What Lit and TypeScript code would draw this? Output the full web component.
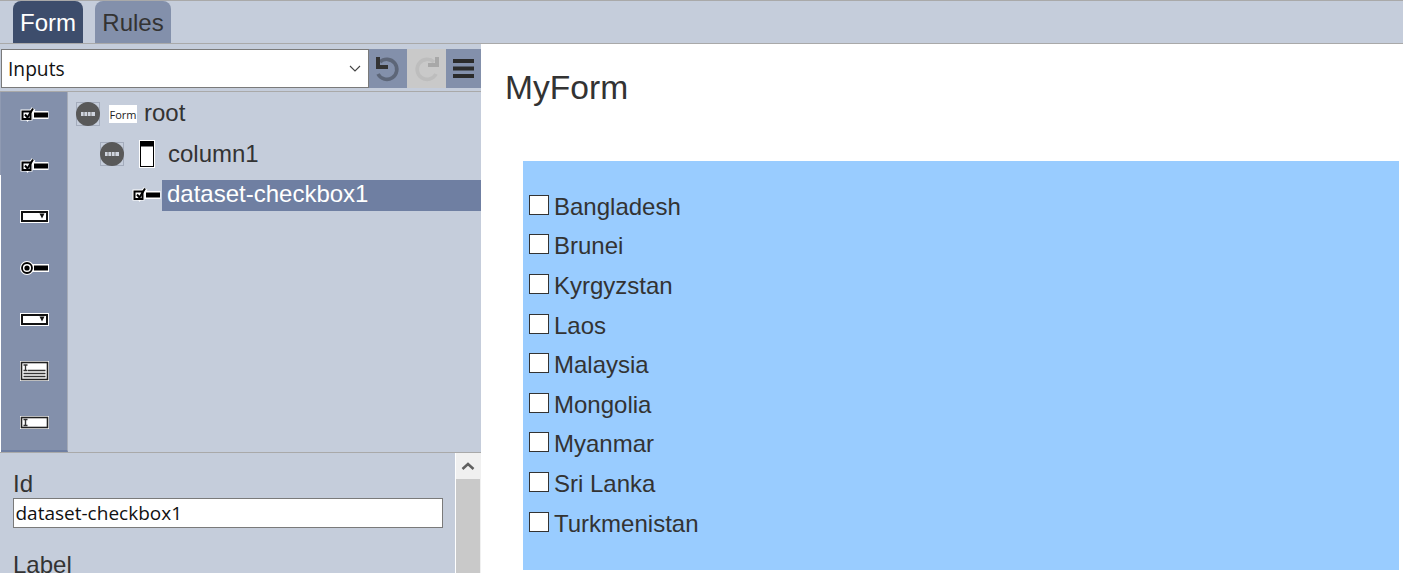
import { LitElement, html, css, svg } from "lit";
import { customElement } from "lit/decorators.js";

const frame = (inner: unknown, w = 29, h = 18) =>
  html`<svg class="ico" width=${w} height=${h} viewBox="0 0 ${w} ${h}">${inner}</svg>`;

const checkIcon = () => frame(svg`
  <rect x="0.5" y="4.5" width="12" height="11" fill="#fff"/>
  <rect x="12.5" y="6" width="16" height="8" fill="#fff"/>
  <path d="M5 9.5l2.5 3.5 6-9.5" fill="none" stroke="#fff" stroke-width="4.5"/>
  <rect x="2.5" y="6.5" width="8" height="7.5" fill="#fff" stroke="#000" stroke-width="2"/>
  <path d="M5 9.5l2.5 3 5.5-9" fill="none" stroke="#000" stroke-width="2"/>
  <rect x="14" y="7.5" width="14" height="5" fill="#000"/>`);
const selectIcon = () => frame(svg`
  <rect x="0" y="0" width="29" height="13" fill="#fff"/>
  <rect x="2" y="2" width="25" height="9" fill="#fff" stroke="#111" stroke-width="2"/>
  <path d="M19.5 3.5h5l-2.5 5z" fill="#111"/>`, 29, 13);
const radioIcon = () => frame(svg`
  <circle cx="7" cy="7" r="7" fill="#fff"/>
  <rect x="12" y="3" width="17" height="8" fill="#fff"/>
  <circle cx="7" cy="7" r="5" fill="#fff" stroke="#000" stroke-width="1.8"/>
  <circle cx="7" cy="7" r="2.6" fill="#000"/>
  <rect x="14" y="4.5" width="14" height="5" fill="#000"/>`, 29, 14);
const areaIcon = () => frame(svg`
  <rect x="0" y="0" width="29" height="20" fill="#fff"/>
  <rect x="1.5" y="1.5" width="26" height="17" fill="#fff" stroke="#222" stroke-width="1.6"/>
  <path d="M3.5 4h4M5.5 4v5.5M3.5 9.5h4" stroke="#333" stroke-width="1.3" fill="none"/>
  <path d="M8 9.5h17.5M3.5 12.5h22M3.5 15.5h22" stroke="#333" stroke-width="1.3"/>`, 29, 20);
const inputIcon = () => frame(svg`
  <rect x="0" y="0" width="29" height="13" fill="#fff"/>
  <rect x="1.5" y="1.5" width="26" height="10" fill="#fff" stroke="#222" stroke-width="1.6"/>
  <path d="M3.5 3.5h4M5.5 3.5v6M3.5 9.5h4" stroke="#333" stroke-width="1.4" fill="none"/>`, 29, 13);
const eye = () => html`<svg class="eye" width="24" height="24" viewBox="0 0 24 24">
  <rect x=".5" y=".5" width="23" height="23" fill="none" stroke="#a4acbc"/>
  <circle cx="12" cy="12" r="12" fill="#595959"/>
  <rect x="5" y="10" width="14" height="4" fill="#cfd4de"/>
  <path d="M8 10v4M11.5 10v4M15 10v4" stroke="#7d7d7d" stroke-width="1"/></svg>`;
const columnIcon = () => html`<svg width="16" height="28" viewBox="0 0 16 28">
  <rect width="16" height="28" fill="#fff"/>
  <rect x="1.5" y="1.5" width="13" height="25" fill="#fff" stroke="#000" stroke-width="1"/>
  <rect x="1.5" y="1.5" width="13" height="5" fill="#000"/></svg>`;

const COUNTRIES = ["Bangladesh", "Brunei", "Kyrgyzstan", "Laos", "Malaysia", "Mongolia", "Myanmar", "Sri Lanka", "Turkmenistan"];

@customElement("app-root")
export class AppRoot extends LitElement {
  static styles = css`
    :host { display: block; width: 1403px; height: 573px; overflow: hidden; background: #fff;
      font-family: "Liberation Sans", Arial, sans-serif; color: #333; }
    .topbar { background: #c5cddb; border-top: 1px solid #a9a9a9;
      border-bottom: 1px solid #a9a9a9; display: flex; gap: 12px; padding-left: 13px; align-items: flex-end; height: 42px; }
    .tab { height: 42px; box-sizing: border-box; border-radius: 8px 8px 0 0; font-size: 24px; line-height: 44px; text-align: center; }
    .tab.a { width: 70px; background: #3d4d6c; color: #fff; }
    .tab.b { width: 76px; background: #8390ab; color: #333; }
    .main { display: flex; height: 529px; }
    .left { width: 481px; background: #c5cddb; display: flex; flex-direction: column; flex: none; }
    .toolbar { height: 48px; box-sizing: border-box; border-bottom: 1px solid #a9a9a9; padding: 5px 0 0 1px; display: flex; align-items: flex-start; }
    .select { width: 368px; flex: none; height: 39px; box-sizing: border-box; background: #fff; border: 1px solid #7a7a7a; font: 19.2px "Open Sans", "Noto Sans", sans-serif;
      color: #111; display: flex; align-items: center; justify-content: space-between; padding: 0 7px 0 6px; }
    .tb { height: 39px; flex: none; display: flex; align-items: center; justify-content: center; }
    .tb svg { display: block; }
    .tb.undo { width: 38px; background: #8390ab; }
    .tb.redo { width: 39px; background: #c9c9c9; }
    .tb.menu { width: 35px; background: #8390ab; }
    .mid { height: 360px; display: flex; border-bottom: 1px solid #a9a9a9; }
    .edge { width: 1px; flex: none; background: linear-gradient(#8f9ab2 83px, #fff 83px); }
    .side { width: 67px; flex: none; background: #8390ab; border-right: 1px solid #a6acb8; border-bottom: 2px solid #6f7fa2; box-sizing: border-box; display: flex; flex-direction: column; gap: 7.4px; }
    .side .slot { height: 44px; flex: none; display: flex; align-items: center; padding-left: 19px; }
    .side .ico { display: block; }
    .tree { flex: 1; padding-top: 2px; font-size: 24px; }
    .node { display: flex; align-items: center; height: 40px; color: #333; }
    .formtag { width: 28px; height: 18px; background: #fff; color: #222; font: 11px "Open Sans", sans-serif; display: flex; align-items: center; justify-content: center; margin-left: 9px; margin-right: 7px; }
    .n1 { padding-left: 8px; }
    .n1 .lbl { margin-top: -2px; }
    .n2 { padding-left: 32px; }
    .n2 svg:last-of-type { margin-left: 15px; margin-right: 13px; }
    .n3 { padding-left: 64px; }
    .n3 .sel { flex: 1; height: 31px; line-height: 27px; background: #6f7fa2; color: #fff; padding-left: 5px; margin-top: 3px; margin-left: 1px; }
    .props { flex: 1; position: relative; padding: 17px 0 0 13px; overflow: hidden; color: #333; }
    .props label { display: block; line-height: 28px; font-size: 24px; }
    .props .inp { width: 430px; height: 30px; box-sizing: border-box; background: #fff; border: 1px solid #7a7a7a; font: 19px "Open Sans", sans-serif; color: #111; padding-left: 1.5px; line-height: 28px; margin-bottom: 23px; }
    .scroll { position: absolute; right: 0; top: 0; bottom: 0; width: 26px; box-sizing: border-box; border-left: 1px solid #fff; border-right: 1px solid #f0f0f0; background: #c9c9c9; }
    .scroll .up { height: 26px; background: #f0f0f0; display: flex; align-items: center; justify-content: center; }
    .right { flex: 1; padding: 22px 0 0 24px; }
    h1 { margin: 0; font-weight: 400; font-size: 33.6px; line-height: 44px; color: #333; }
    .panel { margin: 51px 4px 0 18px; height: 409px; background: #99ccff; box-sizing: border-box; padding-top: 26px; padding-left: 6px; }
    .row { display: flex; align-items: center; height: 39.6px; font-size: 24px; color: #333; }
    .box { width: 20px; height: 20px; box-sizing: border-box; background: #fff; border: 1px solid #333; margin-right: 5px; margin-top: -4px; flex: none; }
  `;

  render() {
    return html`
      <div class="topbar"><div class="tab a">Form</div><div class="tab b">Rules</div></div>
      <div class="main">
        <div class="left">
          <div class="toolbar">
            <div class="select"><span>Inputs</span>
              <svg width="12" height="8" viewBox="0 0 12 8"><path d="M1 1l5 5 5-5" fill="none" stroke="#444" stroke-width="1.1"/></svg>
            </div>
            <div class="tb undo"><svg width="38" height="39" viewBox="0 0 38 39">
              <path d="M11 13a10 10 0 1 1 -2 12" fill="none" stroke="#5d6678" stroke-width="3.6"/>
              <path d="M7 8h4v8h8v4H7z" fill="#333"/></svg></div>
            <div class="tb redo"><svg width="39" height="39" viewBox="0 0 39 39">
              <path d="M27 13a10 10 0 1 0 2 12" fill="none" stroke="#bdbdbd" stroke-width="3.6"/>
              <path d="M28 8h4v10H21v-4h7z" fill="#a8a8a8"/></svg></div>
            <div class="tb menu"><svg width="21" height="19" viewBox="0 0 21 19"><path d="M0 2h21M0 9.5h21M0 17h21" stroke="#2b2b2b" stroke-width="4"/></svg></div>
          </div>
          <div class="mid">
            <div class="edge"></div>
            <div class="side">
              ${[checkIcon(), checkIcon(), selectIcon(), radioIcon(), selectIcon(), areaIcon(), inputIcon()].map(i => html`<div class="slot">${i}</div>`)}
            </div>
            <div class="tree">
              <div class="node n1">${eye()}<div class="formtag">Form</div><span class="lbl">root</span></div>
              <div class="node n2">${eye()}${columnIcon()}column1</div>
              <div class="node n3">${checkIcon()}<div class="sel">dataset-checkbox1</div></div>
            </div>
          </div>
          <div class="props">
            <label>Id</label>
            <div class="inp">dataset-checkbox1</div>
            <label>Label</label>
            <div class="scroll"><div class="up"><svg width="14" height="10" viewBox="0 0 14 10"><path d="M1.5 8l5.5-5 5.5 5" fill="none" stroke="#606060" stroke-width="2.5"/></svg></div></div>
          </div>
        </div>
        <div class="right">
          <h1>MyForm</h1>
          <div class="panel">
            ${COUNTRIES.map(c => html`<div class="row"><div class="box"></div>${c}</div>`)}
          </div>
        </div>
      </div>`;
  }
}
